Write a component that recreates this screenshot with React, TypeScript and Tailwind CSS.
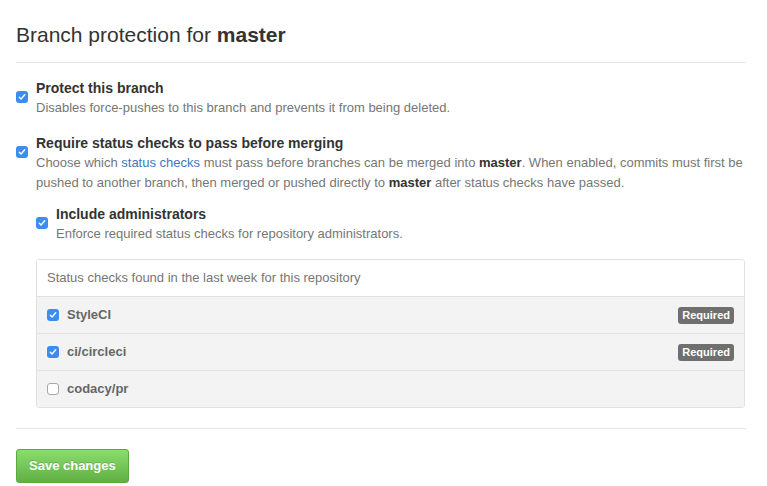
import React from "react";

function Check({ checked }: { checked: boolean }) {
  if (!checked) {
    return (
      <span className="inline-block w-[12px] h-[12px] rounded-[3px] border border-[#a8a8a8] bg-white shrink-0" />
    );
  }
  return (
    <span className="inline-flex items-center justify-center w-[12px] h-[12px] rounded-[3px] bg-[#3b8df2] shrink-0">
      <svg width="8" height="8" viewBox="0 0 8 8" fill="none">
        <path d="M1.3 4.2 L3.1 6 L6.7 1.8" stroke="white" strokeWidth="1.4" strokeLinecap="round" strokeLinejoin="round" />
      </svg>
    </span>
  );
}

function Badge() {
  return (
    <span className="inline-block h-[17px] leading-[17px] px-[4px] rounded-[3px] bg-[#6f6f6f] text-white text-[11px] font-bold">
      Required
    </span>
  );
}

export default function App() {
  const rows = [
    { name: "StyleCI", checked: true },
    { name: "ci/circleci", checked: true },
    { name: "codacy/pr", checked: false },
  ];
  return (
    <div className="w-[767px] h-[486px] bg-white font-['Liberation_Sans',Arial,sans-serif] text-[#333] overflow-hidden">
      <div className="ml-4 w-[730px]">
        <div className="pt-5 pb-3 border-b border-[#e5e5e5]">
          <h2 className="text-[21px] leading-[30px] font-normal">
            Branch protection for <strong className="font-bold">master</strong>
          </h2>
        </div>

        <div className="mt-[15px] flex gap-[8px]">
          <div className="pt-[6px]"><Check checked /></div>
          <div>
            <div className="text-[14px] leading-5 font-bold">Protect this branch</div>
            <div className="text-[13px] leading-5 text-[#767676]">
              Disables force-pushes to this branch and prevents it from being deleted.
            </div>
          </div>
        </div>

        <div className="mt-[15px] flex gap-[8px]">
          <div className="pt-[6px]"><Check checked /></div>
          <div className="flex-1">
            <div className="text-[14px] leading-5 font-bold">Require status checks to pass before merging</div>
            <div className="text-[13px] leading-5 text-[#767676]">
              Choose which <span className="text-[#4078c0]">status checks</span> must pass before branches can be merged into{" "}
              <strong className="text-[#333] font-bold">master</strong>. When enabled, commits must first be pushed to another
              branch, then merged or pushed directly to <strong className="text-[#333] font-bold">master</strong> after status
              checks have passed.
            </div>
          </div>
        </div>

        <div className="mt-[11px] ml-5 flex gap-[8px]">
          <div className="pt-[6px]"><Check checked /></div>
          <div>
            <div className="text-[14px] leading-5 font-bold">Include administrators</div>
            <div className="text-[13px] leading-5 text-[#767676]">
              Enforce required status checks for repository administrators.
            </div>
          </div>
        </div>

        <div className="mt-[15px] ml-5 w-[709px] rounded-[3px] border border-[#e1e1e1] overflow-hidden">
          <div className="h-[36px] px-[10px] flex items-center text-[13px] text-[#767676] bg-white">
            Status checks found in the last week for this repository
          </div>
          {rows.map((r) => (
            <div
              key={r.name}
              className="h-[37px] pl-[10px] pr-[10px] flex items-center border-t border-[#e1e1e1] bg-[#f3f3f3]"
            >
              <Check checked={r.checked} />
              <span className="ml-[8px] text-[13px] font-bold text-[#666]">{r.name}</span>
              <span className="flex-1" />
              {r.checked && <Badge />}
            </div>
          ))}
        </div>

        <div className="mt-[20px] border-t border-[#e5e5e5]" />

        <button className="mt-[20px] h-[34px] px-3 rounded-[3px] border border-[#5ca941] bg-gradient-to-b from-[#8add6d] to-[#60b044] text-white text-[13px] font-bold [text-shadow:0_-1px_0_rgba(0,0,0,0.15)]">
          Save changes
        </button>
      </div>
    </div>
  );
}
